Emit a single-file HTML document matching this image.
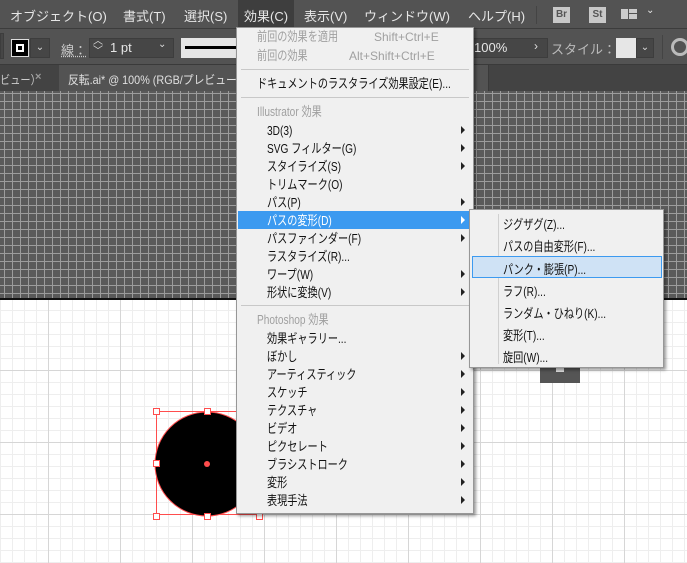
<!DOCTYPE html><html><head><meta charset="utf-8"><style>
*{margin:0;padding:0;box-sizing:border-box}
body{width:687px;height:563px;overflow:hidden;position:relative;font-family:"Liberation Sans","Noto Sans CJK JP",sans-serif;background:#fff}
.a{position:absolute;white-space:nowrap}
.mb{left:0;top:0;width:687px;height:29px;background:#535353;border-bottom:1px solid #3c3c3c}
.mb span{position:absolute;top:6px;font-size:13px;color:#e6e6e6}
.tb{left:0;top:29px;width:687px;height:36px;background:#535353;border-bottom:1px solid #3a3a3a}
.tabs{left:0;top:65px;width:687px;height:26px;background:#434343}
.dark{left:0;top:91px;width:687px;height:207px;background-color:#5a5a5a;
background-image:linear-gradient(90deg,#9c9c9c 1px,transparent 1px),linear-gradient(#9c9c9c 1px,transparent 1px);background-size:8px 8px;background-position:4px 2px}
.light{left:0;top:298px;width:687px;height:265px;border-top:2px solid #111;background-color:#fff;
background-image:linear-gradient(90deg,#d6d6d6 1px,transparent 1px),linear-gradient(#d6d6d6 1px,transparent 1px),linear-gradient(90deg,#eeeeee 1px,transparent 1px),linear-gradient(#eeeeee 1px,transparent 1px);
background-size:72px 72px,72px 72px,12px 12px,12px 12px;background-position:48px 70px,48px 70px,0 10px,0 10px}
.menu{left:236px;top:27px;width:238px;height:487px;background:#f0f0f0;border:1px solid #979797;box-shadow:2px 2px 3px rgba(0,0,0,.4)}
.menu div,.sub div{transform:scaleX(.78);transform-origin:0 0}
.menu div{position:absolute;font-size:13px;color:#111;height:18px;line-height:18px}
.menu div.sc{transform:none;font-size:12px}
.g{color:#a0a0a0!important}
.ar{position:absolute;left:224px;width:0;height:0;border-left:4px solid #222;border-top:4px solid transparent;border-bottom:4px solid transparent}
.sep{position:absolute;left:4px;width:228px;height:1px;background:#c8c8c8}
.sub{left:469px;top:209px;width:195px;height:159px;background:#f0f0f0;border:1px solid #979797;box-shadow:2px 2px 3px rgba(0,0,0,.4)}
.sub div{position:absolute;left:33px;font-size:13px;color:#111}
.h{position:absolute;border:1px solid #3c9af0;background:#cfe2f5}
.box{position:absolute;background:#464646;border:1px solid #3d3d3d}
.hd{position:absolute;width:7px;height:7px;border:1px solid #ff4d4d;background:#fff}
</style></head><body>
<div class="a mb">
<span style="left:10px">オブジェクト(O)</span><span style="left:123px">書式(T)</span><span style="left:184px">選択(S)</span>
<span style="left:238px;top:0;width:56px;height:29px;background:#3e3e3e"></span>
<span style="left:244px">効果(C)</span><span style="left:304px">表示(V)</span><span style="left:364px">ウィンドウ(W)</span><span style="left:468px">ヘルプ(H)</span>
<span style="left:536px;top:6px;width:1px;height:18px;background:#444"></span>
<span style="left:553px;top:7px;width:17px;height:16px;background:#c8c8c8;color:#555;font-size:10px;font-weight:bold;text-align:center;line-height:16px">Br</span>
<span style="left:589px;top:7px;width:17px;height:16px;background:#c8c8c8;color:#555;font-size:10px;font-weight:bold;text-align:center;line-height:16px">St</span>
<span style="left:621px;top:9px;width:7px;height:10px;background:#ccc"></span><span style="left:629px;top:9px;width:8px;height:4px;background:#ccc"></span><span style="left:629px;top:14px;width:8px;height:5px;background:#ccc"></span>
<span style="left:646px;top:5px;font-size:10px">⌄</span>
</div>
<div class="a tb">
<div class="box" style="left:0;top:4px;width:4px;height:26px"></div>
<div class="a" style="left:11px;top:10px;width:18px;height:18px;background:#000;border:1px solid #ddd"><div style="margin:4px;width:8px;height:8px;border:2px solid #fff"></div></div>
<div class="box" style="left:30px;top:9px;width:20px;height:20px;color:#ddd;font-size:10px;text-align:center;line-height:18px">⌄</div>
<div class="a" style="left:61px;top:11px;color:#ccc;font-size:13px;text-decoration:underline dotted">線：</div>
<div class="box" style="left:89px;top:9px;width:85px;height:20px"></div>
<div class="a" style="left:93px;top:8px;color:#ddd;font-size:10px;line-height:10px">︿<br>﹀</div>
<div class="a" style="left:110px;top:11px;color:#e6e6e6;font-size:13px">1 pt</div>
<div class="a" style="left:158px;top:10px;color:#ddd;font-size:10px">⌄</div>
<div class="a" style="left:181px;top:9px;width:60px;height:20px;background:#e6e6e6"><div style="margin:8px 4px;height:3px;background:#000"></div></div>
<div class="box" style="left:470px;top:9px;width:78px;height:20px"></div>
<div class="a" style="left:474px;top:11px;color:#e6e6e6;font-size:13px">100%</div>
<div class="a" style="left:534px;top:10px;color:#ddd;font-size:12px">›</div>
<div class="a" style="left:551px;top:10px;color:#bbb;font-size:13px">スタイル：</div>
<div class="a" style="left:616px;top:9px;width:20px;height:20px;background:#e6e6e6"></div>
<div class="box" style="left:636px;top:9px;width:18px;height:20px;color:#ddd;font-size:10px;text-align:center;line-height:18px">⌄</div>
<div class="a" style="left:662px;top:6px;width:1px;height:24px;background:#444"></div>
<div class="a" style="left:671px;top:9px;width:18px;height:18px;border-radius:50%;border:3px solid #bbb"></div>
</div>
<div class="a tabs">
<div class="a" style="left:0;top:6px;color:#ccc;font-size:12px;transform:scaleX(.85);transform-origin:0 0">ビュー）</div>
<div class="a" style="left:35px;top:6px;color:#999;font-size:11px;font-weight:bold">×</div>
<div class="a" style="left:59px;top:0;width:430px;height:26px;background:#535353;border-right:1px solid #3a3a3a"></div>
<div class="a" style="left:68px;top:6px;color:#e0e0e0;font-size:12px;transform:scaleX(.9);transform-origin:0 0">反転.ai* @ 100% (RGB/プレビュー)</div>
<div class="a" style="left:372px;top:6px;color:#999;font-size:11px;font-weight:bold">×</div>
</div>
<div class="a dark"></div>
<div class="a light"></div>
<div class="a" style="left:540px;top:368px;width:40px;height:15px;background:#555"><div style="margin:0 auto;width:8px;height:4px;background:#ddd"></div></div>
<svg class="a" style="left:150px;top:405px" width="120" height="120">
<rect x="6.5" y="6.5" width="103" height="103" fill="none" stroke="#ff4d4d"/>
<circle cx="57" cy="59" r="52" fill="#000" stroke="#ff4d4d"/>
<circle cx="57" cy="59" r="3" fill="#ff4d4d"/>
</svg>
<div class="hd" style="left:153px;top:408px"></div><div class="hd" style="left:204px;top:408px"></div>
<div class="hd" style="left:153px;top:460px"></div>
<div class="hd" style="left:153px;top:513px"></div><div class="hd" style="left:204px;top:513px"></div><div class="hd" style="left:256px;top:513px"></div>
<div class="a menu">
<div class="g" style="left:20px;top:0">前回の効果を適用</div><div class="g sc" style="left:137px;top:0">Shift+Ctrl+E</div>
<div class="g" style="left:20px;top:19px">前回の効果</div><div class="g sc" style="left:112px;top:19px">Alt+Shift+Ctrl+E</div>
<span class="sep" style="top:41px"></span>
<div style="left:20px;top:47px">ドキュメントのラスタライズ効果設定(E)...</div>
<span class="sep" style="top:69px"></span>
<div class="g" style="left:20px;top:75px">Illustrator 効果</div>
<div style="left:30px;top:94px">3D(3)</div><span class="ar" style="top:98px"></span>
<div style="left:30px;top:112px">SVG フィルター(G)</div><span class="ar" style="top:116px"></span>
<div style="left:30px;top:130px">スタイライズ(S)</div><span class="ar" style="top:134px"></span>
<div style="left:30px;top:148px">トリムマーク(O)</div>
<div style="left:30px;top:166px">パス(P)</div><span class="ar" style="top:170px"></span>
<span style="position:absolute;left:1px;top:183px;width:234px;height:18px;background:#3c9af0"></span>
<div style="left:30px;top:184px;color:#fff">パスの変形(D)</div><span class="ar" style="top:188px;border-left-color:#fff"></span>
<div style="left:30px;top:202px">パスファインダー(F)</div><span class="ar" style="top:206px"></span>
<div style="left:30px;top:220px">ラスタライズ(R)...</div>
<div style="left:30px;top:238px">ワープ(W)</div><span class="ar" style="top:242px"></span>
<div style="left:30px;top:256px">形状に変換(V)</div><span class="ar" style="top:260px"></span>
<span class="sep" style="top:277px"></span>
<div class="g" style="left:20px;top:283px">Photoshop 効果</div>
<div style="left:30px;top:302px">効果ギャラリー...</div>
<div style="left:30px;top:320px">ぼかし</div><span class="ar" style="top:324px"></span>
<div style="left:30px;top:338px">アーティスティック</div><span class="ar" style="top:342px"></span>
<div style="left:30px;top:356px">スケッチ</div><span class="ar" style="top:360px"></span>
<div style="left:30px;top:374px">テクスチャ</div><span class="ar" style="top:378px"></span>
<div style="left:30px;top:392px">ビデオ</div><span class="ar" style="top:396px"></span>
<div style="left:30px;top:410px">ピクセレート</div><span class="ar" style="top:414px"></span>
<div style="left:30px;top:428px">ブラシストローク</div><span class="ar" style="top:432px"></span>
<div style="left:30px;top:446px">変形</div><span class="ar" style="top:450px"></span>
<div style="left:30px;top:464px">表現手法</div><span class="ar" style="top:468px"></span>
</div>
<div class="a sub">
<span style="position:absolute;left:28px;top:4px;width:1px;height:150px;background:#d0d0d0"></span>
<span class="h" style="left:2px;top:46px;width:190px;height:22px"></span>
<div style="top:4px">ジグザグ(Z)...</div>
<div style="top:26px">パスの自由変形(F)...</div>
<div style="top:49px">パンク・膨張(P)...</div>
<div style="top:71px">ラフ(R)...</div>
<div style="top:93px">ランダム・ひねり(K)...</div>
<div style="top:115px">変形(T)...</div>
<div style="top:137px">旋回(W)...</div>
</div>
</body></html>
